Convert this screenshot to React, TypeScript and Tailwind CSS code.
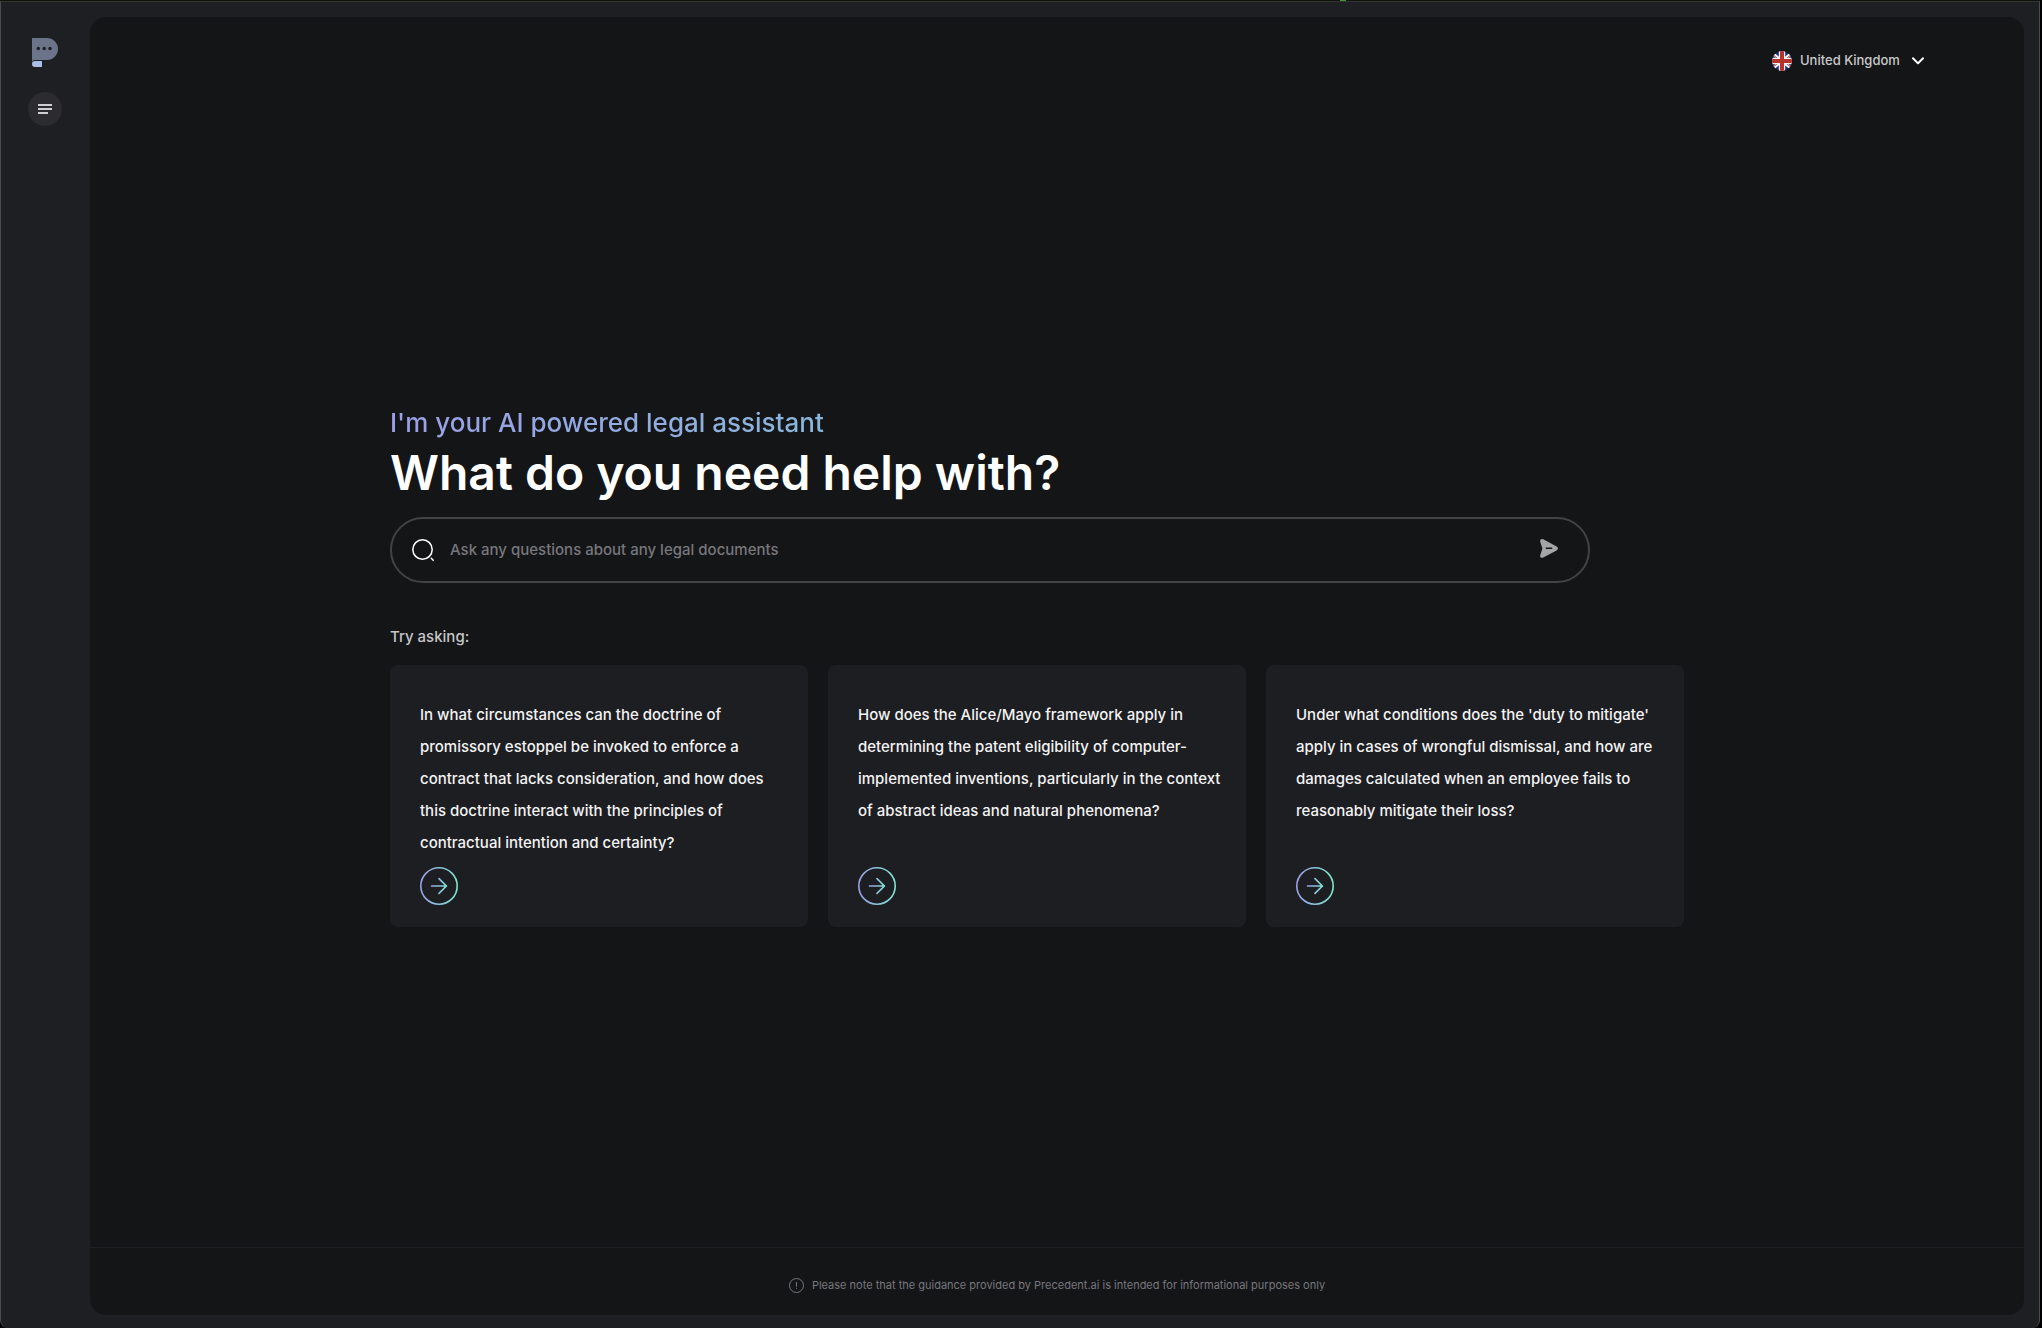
import { useState } from "react"

const questions = [
    "In what circumstances can the doctrine of promissory estoppel be invoked to enforce a contract that lacks consideration, and how does this doctrine interact with the principles of contractual intention and certainty?",
    "How does the Alice/Mayo framework apply in determining the patent eligibility of computer-implemented inventions, particularly in the context of abstract ideas and natural phenomena?",
    "Under what conditions does the 'duty to mitigate' apply in cases of wrongful dismissal, and how are damages calculated when an employee fails to reasonably mitigate their loss?",
]

function Logo() {
    return (
        <svg width="26" height="30" viewBox="0 0 26 30" fill="none">
            <path d="M0 0H15A11 11 0 0 1 15 22H3Q0 22 0 25Z" fill="#6b7488" />
            <circle cx="6.3" cy="10.5" r="1.7" fill="#1e1f23" />
            <circle cx="12.2" cy="10.5" r="1.7" fill="#1e1f23" />
            <circle cx="18" cy="10.5" r="1.7" fill="#1e1f23" />
            <path d="M3 23H10V29H3A3 3 0 0 1 3 23Z" fill="#a9bfe8" />
        </svg>
    )
}

function Flag() {
    return (
        <svg width="20" height="20" viewBox="0 0 20 20" className="shrink-0">
            <clipPath id="flag-clip">
                <circle cx="10" cy="10" r="10" />
            </clipPath>
            <g clipPath="url(#flag-clip)">
                <rect width="20" height="20" fill="#1c2d78" />
                <path d="M0 2L20 18M20 2L0 18" stroke="#f4f4f4" strokeWidth="3" />
                <path d="M0 3L8 9.4M12 9.4L20 3M0 17L8 10.6M12 10.6L20 17" stroke="#b8322c" strokeWidth="1" />
                <path d="M10 0V20M0 10H20" stroke="#f4f4f4" strokeWidth="6.4" />
                <path d="M10 0V20M0 10H20" stroke="#b8322c" strokeWidth="4" />
            </g>
        </svg>
    )
}

function ArrowCircle({ id }: { id: string }) {
    return (
        <svg width="38" height="38" viewBox="0 0 38 38" fill="none">
            <defs>
                <linearGradient id={`${id}-ring`} gradientUnits="userSpaceOnUse" x1="0" y1="0" x2="38" y2="0">
                    <stop stopColor="#9b9fe6" />
                    <stop offset="0.5" stopColor="#8bc0da" />
                    <stop offset="1" stopColor="#7ee8cc" />
                </linearGradient>
                <linearGradient id={`${id}-arrow`} gradientUnits="userSpaceOnUse" x1="11" y1="0" x2="27" y2="0">
                    <stop stopColor="#9b9fe6" />
                    <stop offset="0.5" stopColor="#8bc0da" />
                    <stop offset="1" stopColor="#7ee8cc" />
                </linearGradient>
            </defs>
            <circle cx="19" cy="19" r="18.2" stroke={`url(#${id}-ring)`} strokeWidth="1.6" />
            <path
                d="M11.6 19H26.4V19.01M19 11.7L26.4 19L19 26.3"
                stroke={`url(#${id}-arrow)`}
                strokeWidth="1.7"
                strokeLinecap="round"
                strokeLinejoin="round"
            />
        </svg>
    )
}

function Sidebar() {
    return (
        <aside className="w-[89px] shrink-0 flex flex-col items-center pt-[21px] pr-px">
            <a href="#" aria-label="Precedent.ai home">
                <Logo />
            </a>
            <button
                aria-label="Open menu"
                className="mt-6 size-[34px] rounded-full bg-[#2b2b30] flex items-center justify-center"
            >
                <svg width="14" height="10" viewBox="0 0 14 10" fill="#cfcfd1">
                    <rect width="14" height="2" />
                    <rect y="4" width="14" height="2" />
                    <rect y="8" width="10" height="2" />
                </svg>
            </button>
        </aside>
    )
}

function CountrySelect() {
    return (
        <label className="flex items-center gap-2">
            <Flag />
            <span className="relative flex items-center">
                <select
                    aria-label="Country"
                    className="appearance-none bg-transparent w-[124px] h-6 text-[13px] font-medium text-[#c9c9cb] outline-none"
                >
                    <option>United Kingdom</option>
                </select>
                <svg width="12" height="8" viewBox="0 0 12 8" fill="none" className="absolute right-0 pointer-events-none">
                    <path d="M1 1.2L6 6.4L11 1.2" stroke="#fff" strokeWidth="2" strokeLinecap="round" strokeLinejoin="round" />
                </svg>
            </span>
        </label>
    )
}

function SearchBar({ value, onChange }: { value: string; onChange: (value: string) => void }) {
    return (
        <form
            onSubmit={(e) => e.preventDefault()}
            className="mt-3 w-full max-w-[1200px] h-[66px] rounded-full border-2 border-[#434345] flex items-center gap-4 pl-5 pr-[30px]"
        >
            <svg width="22" height="22" viewBox="0 0 22 22" fill="none" className="shrink-0">
                <circle cx="10.5" cy="10.5" r="9.7" stroke="#fff" strokeWidth="1.5" />
                <path d="M19.3 19.3L21.2 21.2" stroke="#fff" strokeWidth="1.5" strokeLinecap="round" />
            </svg>
            <input
                type="text"
                aria-label="Ask a question"
                placeholder="Ask any questions about any legal documents"
                value={value}
                onChange={(e) => onChange(e.target.value)}
                className="flex-1 min-w-0 bg-transparent text-[15px] font-medium text-white placeholder:text-[#77777c] outline-none"
            />
            <button type="submit" aria-label="Send" className="pb-1">
                <svg width="18" height="19" viewBox="0 0 18 19" fill="none">
                    <path
                        d="M3.2 0.3L16.2 7.3Q19.8 9.5 16.2 11.7L3.2 18.6Q-0.6 19.6 0.3 16L2.4 9.5L0.3 3Q-0.6-0.6 3.2 0.3Z"
                        fill="#a5a5a5"
                    />
                    <path d="M6.3 9.2H11.6" stroke="#141517" strokeWidth="1.5" strokeLinecap="round" />
                </svg>
            </button>
        </form>
    )
}

export default function App() {
    const [query, setQuery] = useState("")

    return (
        <div className="min-h-screen flex flex-col bg-black pr-[2px] font-['Inter',sans-serif]">
            {/* Top edge with the small green marker */}
            <div className="h-px flex justify-center bg-[#10120e]">
                <div className="w-1.5 ml-[646px] bg-[#3f9a35]" />
            </div>

            <div className="flex-1 flex bg-[#1e1f23] border-x border-t border-x-[#4a4b4e] border-t-[#31332f] rounded-b-lg pt-[15px] pb-[13px] pr-[15px]">
                <Sidebar />

                <div className="flex-1 flex flex-col rounded-2xl bg-[#141517]">
                    <header className="flex justify-end pt-8 pb-3 pr-[100px]">
                        <CountrySelect />
                    </header>

                    <main className="flex-1 flex flex-col justify-center pr-10">
                        <div className="w-full max-w-[1294px] mx-auto">
                            <div className="w-fit">
                                <p className="text-[26px] leading-9 font-medium bg-linear-to-r from-[#9b9ee6] from-0% via-[#8bb4db] via-60% to-[#7ed0d0] bg-clip-text text-transparent">
                                    I'm your AI powered legal assistant
                                </p>
                                <h1 className="text-5xl leading-[64px] font-semibold text-white">
                                    What do you need help with?
                                </h1>
                            </div>

                            <SearchBar value={query} onChange={setQuery} />

                            <h2 className="mt-[42px] text-[15px] leading-6 font-medium text-[#c6c6c8]">Try asking:</h2>
                            <div className="mt-4 grid grid-cols-3 gap-5">
                                {questions.map((question, i) => (
                                    <article
                                        key={question}
                                        className="min-h-[262px] rounded-lg bg-[#1d1e22] pt-[34px] pl-[30px] pr-5 pb-[22px] flex flex-col justify-between items-start"
                                    >
                                        <p className="text-[15px] leading-8 font-medium text-[#f3f3f4]">{question}</p>
                                        <button aria-label="Ask this question" onClick={() => setQuery(question)}>
                                            <ArrowCircle id={`ask-${i}`} />
                                        </button>
                                    </article>
                                ))}
                            </div>
                        </div>
                    </main>

                    <footer className="h-[68px] border-t border-[#1f2024] flex items-center justify-center gap-2 pt-2 text-[11px] text-[#77777d]">
                        <svg width="15" height="15" viewBox="0 0 15 15" fill="none" stroke="#77777d">
                            <circle cx="7.5" cy="7.5" r="7" />
                            <path d="M7.5 4V8.6M7.5 9.8V10.8" />
                        </svg>
                        <p>Please note that the guidance provided by Precedent.ai is intended for informational purposes only</p>
                    </footer>
                </div>
            </div>
        </div>
    )
}
